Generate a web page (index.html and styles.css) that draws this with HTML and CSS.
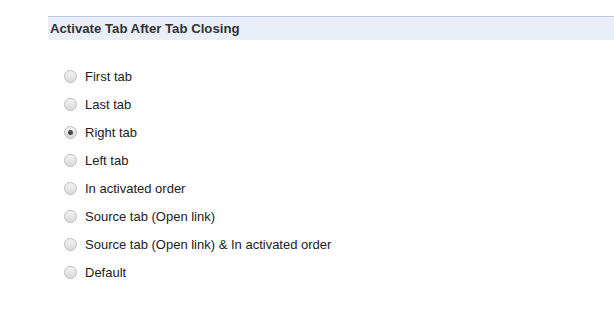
FILE: index.html
```html
<!DOCTYPE html>
<html lang="en">
<head>
    <title>Activate Tab After Tab Closing</title>
    <link rel="stylesheet" href="styles.css">
</head>
<body>
    <div class="section">
        <h3 class="section-title">Activate Tab After Tab Closing</h3>
        <div class="options">
            <label class="option"><input type="radio" name="activate" value="first"> First tab</label>
            <label class="option"><input type="radio" name="activate" value="last"> Last tab</label>
            <label class="option"><input type="radio" name="activate" value="right" checked> Right tab</label>
            <label class="option"><input type="radio" name="activate" value="left"> Left tab</label>
            <label class="option"><input type="radio" name="activate" value="order"> In activated order</label>
            <label class="option"><input type="radio" name="activate" value="source"> Source tab (Open link)</label>
            <label class="option"><input type="radio" name="activate" value="sourceorder"> Source tab (Open link) &amp; In activated order</label>
            <label class="option"><input type="radio" name="activate" value="default"> Default</label>
        </div>
    </div>
</body>
</html>
```

FILE: styles.css
```css
body {
    margin: 0;
    background-color: #fff;
    color: #222;
    font-family: "Liberation Sans", Arial, sans-serif;
    font-size: 13px;
}
.section {
    padding: 16px 0 0 48px;
}
.section-title {
    margin: 0;
    height: 23px;
    line-height: 23px;
    padding-left: 2px;
    border-top: 1px solid #b5c9e6;
    background-color: #e9eef9;
    color: #333;
    font-size: 13.2px;
    font-weight: bold;
}
.options {
    display: flex;
    flex-direction: column;
    padding: 22px 0 0 16px;
}
.option {
    display: flex;
    align-items: center;
    height: 28px;
    cursor: default;
}
.option input {
    appearance: none;
    -webkit-appearance: none;
    width: 13px;
    height: 13px;
    margin: 0 8px 0 0;
    border: 1px solid #bcbcbc;
    border-radius: 50%;
    background: linear-gradient(#f4f4f4, #d9d9d9);
    display: flex;
    align-items: center;
    justify-content: center;
}
.option input:checked::after {
    content: "";
    width: 5px;
    height: 5px;
    border-radius: 50%;
    background-color: #4a4a4a;
}
```
